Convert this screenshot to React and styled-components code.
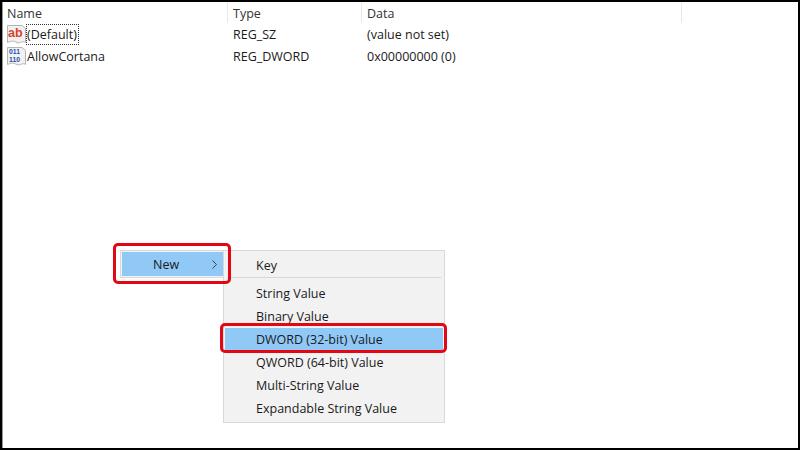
import React from 'react';
import styled, { createGlobalStyle } from 'styled-components';

const GlobalStyle = createGlobalStyle`
  html, body {
    margin: 0;
    padding: 0;
    background: #fff;
  }
  * {
    box-sizing: border-box;
  }
`;

const Frame = styled.div`
  position: relative;
  width: 800px;
  height: 450px;
  overflow: hidden;
  background: #fff;
  border: 2px solid #000;
  border-left-width: 2px;
  box-shadow: inset 1px 0 0 #999;
  font-family: 'Open Sans', 'Noto Sans', sans-serif;
  font-size: 12.5px;
  color: #1a1a1a;
`;

const Grid = styled.div`
  display: grid;
  grid-template-columns: 226px 134px 320px 1fr;
`;

const HeaderCell = styled.div`
  height: 21px;
  padding: 3px 0 0 5px;
  line-height: 17px;
  color: #333;
  border-right: ${({ $last }) => ($last ? 'none' : '1px solid #e8e8e8')};
`;

const Cell = styled.div`
  height: 22px;
  padding-left: 5px;
  padding-top: 1px;
  line-height: 22px;
  white-space: nowrap;
`;

const NameCell = styled(Cell)`
  display: flex;
  align-items: center;
  padding-left: 5px;
`;

const NameLabel = styled.span`
  display: block;
  height: 21px;
  line-height: 19px;
  padding: 0 1px 0 0;
  border: 1px dotted ${({ $focused }) => ($focused ? '#333' : 'transparent')};
`;

const ParentMenu = styled.div`
  position: absolute;
  left: 118px;
  top: 248px;
  width: 103px;
  height: 28px;
  padding: 1px 0 1px 1px;
  background: #f2f2f2;
  border: 1px solid #d9d9d9;
  border-right: none;
`;

const ParentItem = styled.div`
  display: flex;
  align-items: center;
  height: 100%;
  padding-left: 31px;
  background: #90c8f6;
`;

const Chevron = styled.svg`
  margin-left: 32px;
  width: 7px;
  height: 9px;
`;

const Submenu = styled.div`
  position: absolute;
  left: 221px;
  top: 248px;
  width: 222px;
  height: 173px;
  padding: 3px 1px;
  background: #f2f2f2;
  border: 1px solid #d9d9d9;
`;

const MenuItem = styled.div`
  height: 23px;
  padding-left: 31px;
  line-height: 23px;
  background: ${({ $active }) => ($active ? '#90c8f6' : 'transparent')};
`;

const Separator = styled.div`
  height: 1px;
  margin: 0 2px 4px 2px;
  background: #d7d7d7;
`;

const Callout = styled.div`
  position: absolute;
  border: 3px solid #e30613;
  border-radius: 5px;
`;

const NewCallout = styled(Callout)`
  left: 111px;
  top: 241px;
  width: 118px;
  height: 41px;
`;

const DwordCallout = styled(Callout)`
  left: 218px;
  top: 321px;
  width: 227px;
  height: 30px;
`;

// registry value icons, a page with a curled bottom edge
const PageShape = () => (
  <path
    d="M0.5 0.5H15L18.5 3.5V17.5C16 15 13.5 19 10 17.5S5 15.5 0.5 17.5Z"
    fill="#f1f1f1"
    stroke="#b4b4b4"
    strokeWidth="1"
  />
);

const StringIcon = () => (
  <svg width="19" height="19" viewBox="0 0 19 19">
    <PageShape />
    <text x="1" y="12" fontFamily="'Liberation Sans', sans-serif" fontSize="12.5" fontWeight="700" fill="#d8442c">
      ab
    </text>
  </svg>
);

const BinaryIcon = () => (
  <svg width="19" height="19" viewBox="0 0 19 19">
    <PageShape />
    <text x="2" y="7" fontFamily="'Liberation Sans', sans-serif" fontSize="6.8" fontWeight="700" fill="#2a4fb0">
      011
    </text>
    <text x="2" y="15" fontFamily="'Liberation Sans', sans-serif" fontSize="6.8" fontWeight="700" fill="#2a4fb0">
      110
    </text>
  </svg>
);

const rows = [
  { name: '(Default)', type: 'REG_SZ', data: '(value not set)', icon: <StringIcon />, focused: true },
  { name: 'AllowCortana', type: 'REG_DWORD', data: '0x00000000 (0)', icon: <BinaryIcon /> },
];

const App = () => {
  return (
    <Frame>
      <GlobalStyle />
      <Grid>
        <HeaderCell>Name</HeaderCell>
        <HeaderCell>Type</HeaderCell>
        <HeaderCell>Data</HeaderCell>
        <HeaderCell $last />
        {rows.map((row) => (
          <React.Fragment key={row.name}>
            <NameCell>
              {row.icon}
              <NameLabel $focused={row.focused}>{row.name}</NameLabel>
            </NameCell>
            <Cell>{row.type}</Cell>
            <Cell>{row.data}</Cell>
            <Cell />
          </React.Fragment>
        ))}
      </Grid>

      <ParentMenu>
        <ParentItem>
          New
          <Chevron viewBox="0 0 7 9">
            <path d="M1.5 0.5L5.5 4.5L1.5 8.5" fill="none" stroke="#444" strokeWidth="1" />
          </Chevron>
        </ParentItem>
      </ParentMenu>

      <Submenu>
        <MenuItem>Key</MenuItem>
        <Separator />
        <MenuItem>String Value</MenuItem>
        <MenuItem>Binary Value</MenuItem>
        <MenuItem $active>DWORD (32-bit) Value</MenuItem>
        <MenuItem>QWORD (64-bit) Value</MenuItem>
        <MenuItem>Multi-String Value</MenuItem>
        <MenuItem>Expandable String Value</MenuItem>
      </Submenu>

      <NewCallout />
      <DwordCallout />
    </Frame>
  );
};

export default App;
